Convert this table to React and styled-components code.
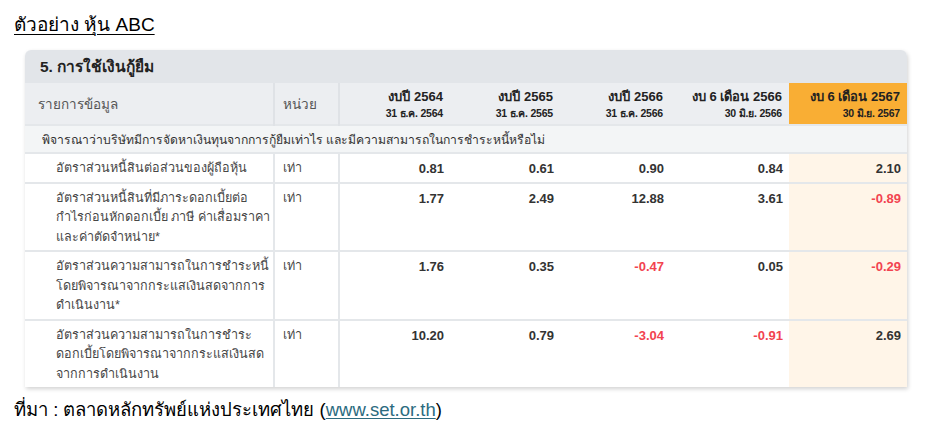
import React from 'react';
import styled, { createGlobalStyle } from 'styled-components';

const GlobalStyle = createGlobalStyle`
  html, body {
    margin: 0;
    padding: 0;
    background: #ffffff;
    font-family: 'Liberation Sans', 'Noto Sans', sans-serif;
  }
`;

const Page = styled.div`
  width: 925px;
  height: 445px;
  padding: 12px 14px 0 14px;
  box-sizing: border-box;
  color: #000;
`;

const Title = styled.h1`
  margin: 0;
  font-size: 19px;
  font-weight: normal;
  line-height: 26px;
  text-decoration: underline;
  text-underline-offset: 3px;
  text-decoration-thickness: 1px;
`;

const Card = styled.div`
  width: 882px;
  margin: 12px 0 0 11px;
  background: #ffffff;
  border-radius: 6px 6px 0 0;
  box-shadow: 1px 2px 4px rgba(0, 0, 0, 0.18);
  overflow: hidden;
`;

const CardHeader = styled.div`
  height: 33px;
  display: flex;
  align-items: center;
  padding-left: 15px;
  background: #e2e5e9;
  font-size: 15.5px;
  font-weight: bold;
  color: #222;
`;

const Table = styled.table`
  width: 882px;
  border-collapse: collapse;
  table-layout: fixed;
  font-size: 13px;
  color: #3c3c3c;
`;

const HeadCell = styled.th`
  height: 41px;
  padding: 0 7px 0 ${(p) => (p.$indent ? '13px' : '8px')};
  text-align: ${(p) => (p.$num ? 'right' : 'left')};
  font-weight: ${(p) => (p.$num ? 'bold' : 'normal')};
  font-size: 13.5px;
  background: ${(p) => (p.$active ? '#f9ae34' : '#eceef1')};
  border-right: ${(p) => (p.$divider ? '2px solid #dfe2e6' : 'none')};
  color: ${(p) => (p.$num ? '#222' : '#555')};
  vertical-align: middle;
  white-space: nowrap;
`;

const HeadMain = styled.div`
  font-size: 13px;
  line-height: 19px;
`;

const HeadSub = styled.div`
  font-size: 10.5px;
  line-height: 15px;
  letter-spacing: -0.2px;
`;

const SectionRow = styled.td`
  height: 26px;
  padding: 0 0 0 17px;
  background: #f3f5f6;
  border-top: 2px solid #e4e7ea;
  border-bottom: 2px solid #e4e7ea;
  font-size: 12.2px;
  color: #333;
  white-space: nowrap;
`;

const Row = styled.tr`
  border-bottom: 2px solid #e4e7ea;
  &:last-child {
    border-bottom: none;
  }
`;

const Cell = styled.td`
  padding: 5px 6px 3px ${(p) => (p.$indent ? '31px' : '8px')};
  vertical-align: top;
  line-height: 19.5px;
  white-space: nowrap;
  font-size: ${(p) => (p.$num ? '13px' : '12.6px')};
  text-align: ${(p) => (p.$num ? 'right' : 'left')};
  font-weight: ${(p) => (p.$num ? 'bold' : 'normal')};
  color: ${(p) => (p.$neg ? '#f2434f' : p.$num ? '#333' : '#474747')};
  background: ${(p) => (p.$active ? '#fff5e8' : 'transparent')};
  border-right: ${(p) => (p.$divider ? '2px solid #e4e7ea' : 'none')};
`;

const Source = styled.p`
  margin: 11px 0 0 0;
  font-size: 18.5px;
  line-height: 24px;
`;

const Link = styled.a`
  color: #2c6b80;
  text-decoration: underline;
  text-underline-offset: 2px;
`;

const widths = [249, 65, 111, 110, 110, 119, 118];

const columns = [
  { main: 'งบปี 2564', sub: '31 ธ.ค. 2564' },
  { main: 'งบปี 2565', sub: '31 ธ.ค. 2565' },
  { main: 'งบปี 2566', sub: '31 ธ.ค. 2566' },
  { main: 'งบ 6 เดือน 2566', sub: '30 มิ.ย. 2566' },
  { main: 'งบ 6 เดือน 2567', sub: '30 มิ.ย. 2567', active: true },
];

const rows = [
  {
    label: ['อัตราส่วนหนี้สินต่อส่วนของผู้ถือหุ้น'],
    values: ['0.81', '0.61', '0.90', '0.84', '2.10'],
  },
  {
    label: ['อัตราส่วนหนี้สินที่มีภาระดอกเบี้ยต่อ', 'กำไรก่อนหักดอกเบี้ย ภาษี ค่าเสื่อมราคา', 'และค่าตัดจำหน่าย*'],
    values: ['1.77', '2.49', '12.88', '3.61', '-0.89'],
  },
  {
    label: ['อัตราส่วนความสามารถในการชำระหนี้', 'โดยพิจารณาจากกระแสเงินสดจากการ', 'ดำเนินงาน*'],
    values: ['1.76', '0.35', '-0.47', '0.05', '-0.29'],
  },
  {
    label: ['อัตราส่วนความสามารถในการชำระ', 'ดอกเบี้ยโดยพิจารณาจากกระแสเงินสด', 'จากการดำเนินงาน'],
    values: ['10.20', '0.79', '-3.04', '-0.91', '2.69'],
  },
];

const App = () => {
  return (
    <Page>
      <GlobalStyle />
      <Title>ตัวอย่าง หุ้น ABC</Title>
      <Card>
        <CardHeader>5. การใช้เงินกู้ยืม</CardHeader>
        <Table>
          <colgroup>
            {widths.map((w, i) => (
              <col key={i} style={{ width: w }} />
            ))}
          </colgroup>
          <thead>
            <tr>
              <HeadCell $indent $divider>รายการข้อมูล</HeadCell>
              <HeadCell $divider>หน่วย</HeadCell>
              {columns.map((c) => (
                <HeadCell key={c.main} $num $active={c.active}>
                  <HeadMain>{c.main}</HeadMain>
                  <HeadSub>{c.sub}</HeadSub>
                </HeadCell>
              ))}
            </tr>
          </thead>
          <tbody>
            <tr>
              <SectionRow colSpan={7}>
                พิจารณาว่าบริษัทมีการจัดหาเงินทุนจากการกู้ยืมเท่าไร และมีความสามารถในการชำระหนี้หรือไม่
              </SectionRow>
            </tr>
            {rows.map((r, i) => (
              <Row key={i}>
                <Cell $indent $divider>
                  {r.label.map((line, j) => (
                    <div key={j}>{line}</div>
                  ))}
                </Cell>
                <Cell $divider>เท่า</Cell>
                {r.values.map((v, j) => (
                  <Cell key={j} $num $neg={v.startsWith('-')} $active={j === 4}>
                    {v}
                  </Cell>
                ))}
              </Row>
            ))}
          </tbody>
        </Table>
      </Card>
      <Source>
        ที่มา : ตลาดหลักทรัพย์แห่งประเทศไทย (<Link href="#">www.set.or.th</Link>)
      </Source>
    </Page>
  );
};

export default App;
